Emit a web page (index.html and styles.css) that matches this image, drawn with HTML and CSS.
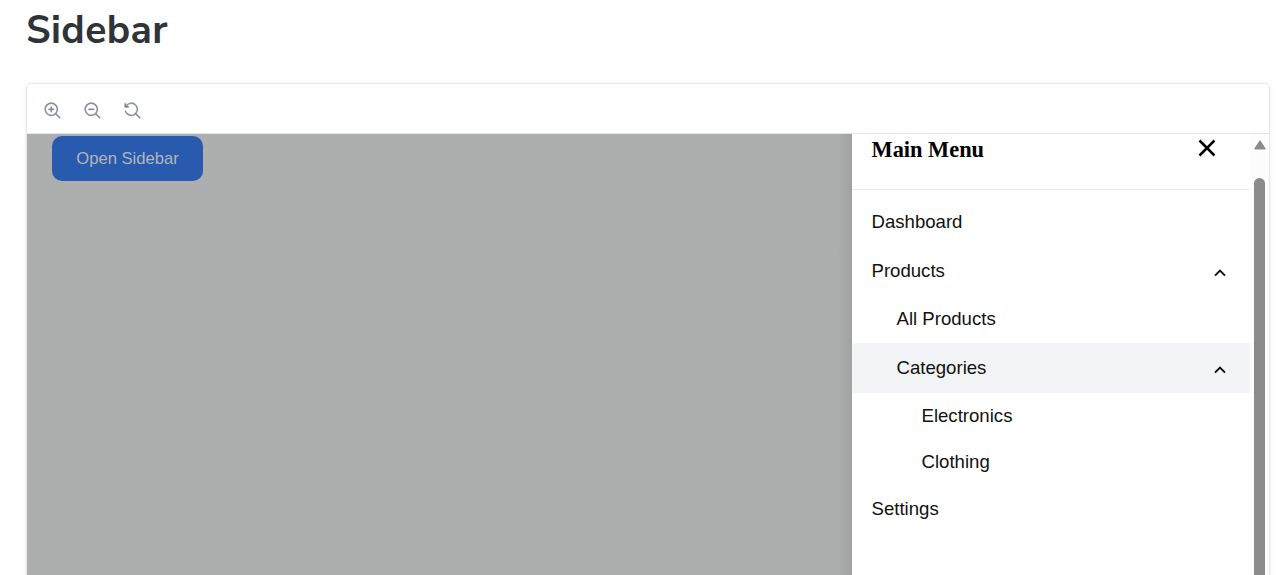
FILE: index.html
```html
<!DOCTYPE html>
<html lang="en">
<head>
<meta charset="utf-8">
<title>Sidebar</title>
<link rel="stylesheet" href="styles.css">
</head>
<body>
<h1 class="title">Sidebar</h1>
<section class="preview">
  <div class="toolbar">
    <svg class="tool" viewBox="0 0 14 14"><path d="M6 3.5a.5.5 0 01.5.5v1.5H8a.5.5 0 010 1H6.5V8a.5.5 0 01-1 0V6.5H4a.5.5 0 010-1h1.5V4a.5.5 0 01.5-.5z"/><path fill-rule="evenodd" d="M9.544 10.206a5.5 5.5 0 11.662-.662.5.5 0 01.148.102l3 3a.5.5 0 01-.708.708l-3-3a.5.5 0 01-.102-.148zM10.5 6a4.5 4.5 0 10-9 0 4.5 4.5 0 009 0z"/></svg>
    <svg class="tool" viewBox="0 0 14 14"><path d="M4 5.5a.5.5 0 000 1h4a.5.5 0 000-1H4z"/><path fill-rule="evenodd" d="M9.544 10.206a5.5 5.5 0 11.662-.662.5.5 0 01.148.102l3 3a.5.5 0 01-.708.708l-3-3a.5.5 0 01-.102-.148zM10.5 6a4.5 4.5 0 10-9 0 4.5 4.5 0 009 0z"/></svg>
    <svg class="tool" viewBox="0 0 14 14"><path class="arrowhead" d="M.8 1.5V4.2h2.9z"/><path d="M1.5 2.837V1.5a.5.5 0 00-1 0V4a.5.5 0 00.5.5h2.5a.5.5 0 000-1H2.258a4.5 4.5 0 11-.496 4.016.5.5 0 10-.942.337 5.502 5.502 0 008.724 2.353.5.5 0 00.102.148l3 3a.5.5 0 00.708-.708l-3-3a.5.5 0 00-.148-.102A5.5 5.5 0 101.5 2.837z"/></svg>
  </div>
  <div class="canvas">
    <div class="backdrop"><button class="open">Open Sidebar</button></div>
    <aside class="sidebar">
      <header class="head">
        <h2 class="menu-title">Main Menu</h2>
        <svg class="close" viewBox="0 0 18 18"><path d="M1.5 1.5l15 15M16.5 1.5l-15 15"/></svg>
      </header>
      <nav class="menu">
        <div class="item">Dashboard</div>
        <div class="item parent">Products<svg class="chevron" viewBox="0 0 12 8"><path d="M1 6.6L6 1.6l5 5"/></svg></div>
        <div class="item level-1">All Products</div>
        <div class="item parent level-1 active">Categories<svg class="chevron" viewBox="0 0 12 8"><path d="M1 6.6L6 1.6l5 5"/></svg></div>
        <div class="item level-2">Electronics</div>
        <div class="item level-2">Clothing</div>
        <div class="item">Settings</div>
      </nav>
    </aside>
    <div class="scrollbar">
      <svg class="arrow" viewBox="0 0 12 10"><path d="M6 1.2L11 8.8H1z"/></svg>
      <div class="thumb"></div>
    </div>
  </div>
</section>
</body>
</html>
```

FILE: styles.css
```css
* { box-sizing: border-box; }
body {
  margin: 0;
  height: 575px;
  overflow: hidden;
  background: #fff;
  font-family: "Liberation Sans", Arial, sans-serif;
}
.title {
  margin: 0;
  height: 83px;
  padding: 6px 0 0 26px;
  font: 700 39px/50px "Nunito Sans", "Open Sans", sans-serif;
  letter-spacing: 0.4px;
  color: #2e3438;
}
.preview {
  width: 1244px;
  height: 520px;
  margin-left: 26px;
  border: 1px solid #e3e8ec;
  border-radius: 5px;
  box-shadow: 0 1px 4px rgba(0, 0, 0, 0.08);
  overflow: hidden;
}
.toolbar {
  display: flex;
  align-items: center;
  gap: 22.6px;
  height: 50px;
  padding: 4px 0 0 17px;
  border-bottom: 1px solid #dfe5ea;
}
.tool { width: 17px; height: 17px; margin-right: 0.2px; fill: #7f8c98; stroke: #7f8c98; stroke-width: 0.25; }
.canvas { display: flex; height: 470px; }
.backdrop {
  flex: 1;
  padding: 2px 0 0 25px;
  background: linear-gradient(to left, #a0a2a1, #adafae 14px);
}
.open {
  display: block;
  width: 151px;
  height: 45px;
  padding: 0;
  border: 0;
  border-radius: 10px;
  background: #285bae;
  color: #b3b5b8;
  font: 16.6px "Liberation Sans", Arial, sans-serif;
}
.sidebar { width: 398px; background: #fff; }
.head {
  display: flex;
  justify-content: space-between;
  height: 56px;
  padding: 3px 34px 0 19.5px;
  border-bottom: 1px solid #e8ebee;
}
.menu-title {
  margin: 0;
  font: 700 22.4px/26px "Liberation Serif", "Times New Roman", serif;
  color: #000;
}
.close { width: 18px; height: 18px; margin-top: 2px; fill: none; stroke: #000; stroke-width: 2.5; }
.menu { padding-top: 9px; }
.item {
  display: flex;
  align-items: center;
  justify-content: space-between;
  height: 47px;
  padding: 0 24px 0 19.5px;
  font-size: 18.6px;
  color: #111;
}
.item:first-child { padding-bottom: 1px; }
.parent { height: 49px; }
.level-1 { height: 48px; padding-left: 44.5px; }
.level-1.active { height: 50px; }
.level-2 { height: 46.5px; padding-left: 69.5px; }
.level-2, .level-2 + .item { padding-bottom: 1px; }
.active { background: #f2f3f5; }
.chevron { width: 12px; height: 8px; margin-top: 4px; fill: none; stroke: #111; stroke-width: 2; }
.scrollbar {
  display: flex;
  flex-direction: column;
  align-items: center;
  width: 19px;
  padding-top: 6px;
  background: #fcfcfc;
}
.arrow { width: 12px; height: 10px; fill: #8b8b8b; stroke: #8b8b8b; stroke-width: 1.5; stroke-linejoin: round; }
.thumb { width: 11px; flex: 1; margin-top: 28px; border-radius: 6px 6px 0 0; background: #8b8b8b; }
```
